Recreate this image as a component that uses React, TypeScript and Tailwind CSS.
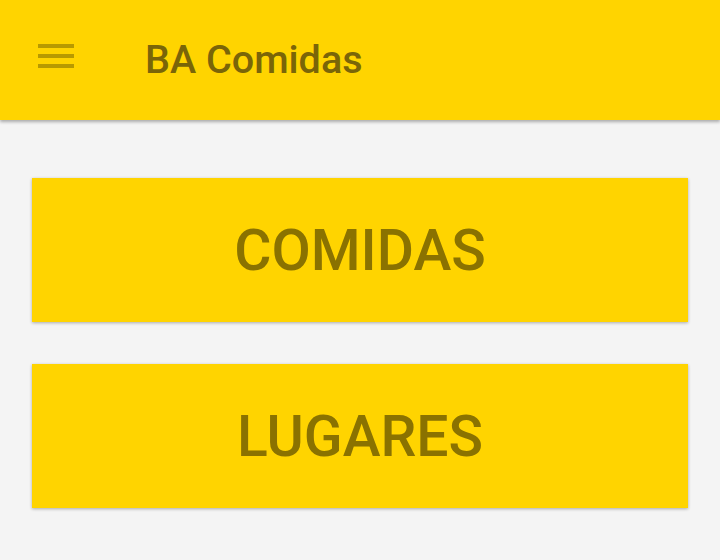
import React from "react";

const MenuButton: React.FC<{ label: string }> = ({ label }) => (
  <button className="w-full h-[144px] bg-[#ffd400] flex items-center justify-center shadow-[0_1px_3px_rgba(0,0,0,0.3)]">
    <span className="text-[57px] font-medium text-[#8a7200] leading-none">
      {label}
    </span>
  </button>
);

const App: React.FC = () => {
  return (
    <div className="w-[720px] h-[560px] bg-[#f4f4f4] overflow-hidden font-['Roboto',sans-serif]">
      <header className="relative z-10 h-[120px] bg-[#ffd400] flex items-center shadow-[0_2px_3px_rgba(0,0,0,0.3)]">
        <div className="ml-[38px] mb-[8px] w-[36px] flex flex-col gap-[6px]">
          <span className="block h-[4px] bg-[#b89a00]" />
          <span className="block h-[4px] bg-[#b89a00]" />
          <span className="block h-[4px] bg-[#b89a00]" />
        </div>
        <h1 className="ml-[71px] text-[39.5px] font-medium text-[#7a6508] leading-none">
          BA Comidas
        </h1>
      </header>

      <main className="px-[32px] pt-[58px] flex flex-col gap-[42px]">
        <MenuButton label="COMIDAS" />
        <MenuButton label="LUGARES" />
      </main>
    </div>
  );
};

export default App;
